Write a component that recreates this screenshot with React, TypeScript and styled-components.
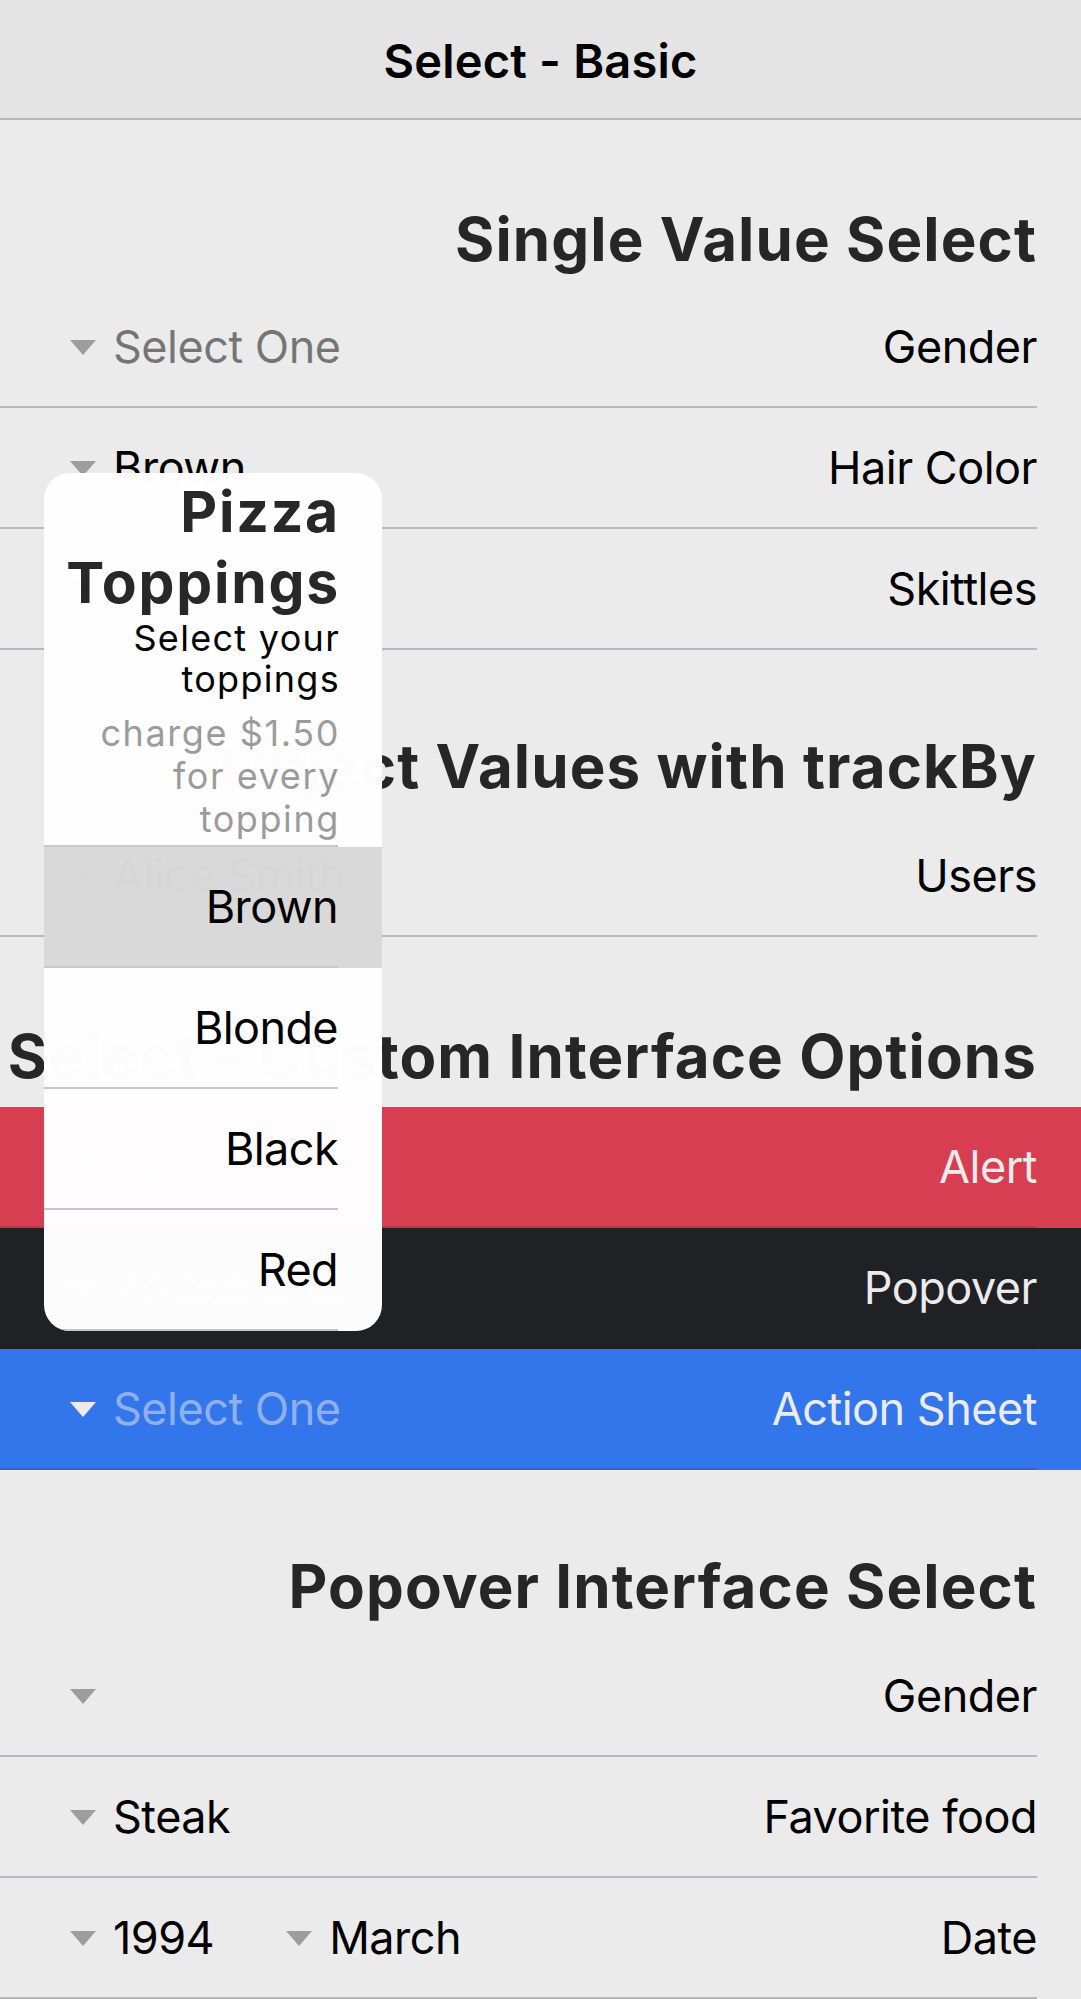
import React from 'react';
import styled, { createGlobalStyle } from 'styled-components';

type Tone = 'danger' | 'dark' | 'primary' | undefined;

const toneBg: Record<string, string> = {
  danger: '#eb445a',
  dark: '#222428',
  primary: '#3880ff',
};
const toneLine: Record<string, string> = {
  danger: '#cf3c4f',
  dark: '#1e2023',
  primary: '#3171e0',
};

const GlobalStyle = createGlobalStyle`
  *, *::before, *::after { box-sizing: border-box; }
  html, body { margin: 0; padding: 0; overflow: hidden; }
  body {
    font-family: Inter, "Noto Sans", "Liberation Sans", sans-serif;
    -webkit-font-smoothing: antialiased;
  }
`;

const Page = styled.div`
  position: relative;
  width: 100%;
  height: 1999px;
  overflow: hidden;
  background: #ffffff;
`;

const Toolbar = styled.header`
  height: 120px;
  padding-top: 3px;
  background: #f8f8f8;
  border-bottom: 2px solid #c6c6c6;
  display: flex;
  align-items: center;
  justify-content: center;
`;

const Title = styled.h1`
  margin: 0;
  font-size: 47px;
  font-weight: 600;
  letter-spacing: 0.2px;
  color: #000;
`;

const ListHeader = styled.h2<{ $top: number; $bottom: number }>`
  margin: 0;
  padding: ${(p) => p.$top}px 44px ${(p) => p.$bottom}px 0;
  font-size: 60px;
  line-height: 58px;
  font-weight: 700;
  letter-spacing: 1.1px;
  color: #2a2a2a;
  text-align: right;
  white-space: nowrap;
`;

const Item = styled.div<{ $tone?: Tone }>`
  padding-right: 44px;
  background: ${(p) => (p.$tone ? toneBg[p.$tone] : 'transparent')};
`;

const ItemInner = styled.div<{ $tone?: Tone }>`
  height: 121px;
  padding-left: 50px;
  display: flex;
  align-items: center;
  border-bottom: 2px solid ${(p) => (p.$tone ? toneLine[p.$tone] : '#c8c7cc')};
`;

const Label = styled.span<{ $tone?: Tone }>`
  margin-left: auto;
  font-size: 45px;
  letter-spacing: -0.5px;
  white-space: nowrap;
  color: ${(p) => (p.$tone ? '#ffffff' : '#000000')};
`;

const Select = styled.div`
  display: flex;
  align-items: center;
  gap: 17px;
  padding: 0 52px 0 20px;
`;

const SelectIcon = styled.span<{ $tone?: Tone }>`
  width: 0;
  height: 0;
  margin-top: 2px;
  border-top: 15px solid ${(p) => (p.$tone ? '#ffffff' : '#ababab')};
  border-left: 13.5px solid transparent;
  border-right: 13.5px solid transparent;
`;

const SelectText = styled.span<{ $tone?: Tone; $placeholder?: boolean }>`
  font-size: 45px;
  letter-spacing: -0.5px;
  white-space: nowrap;
  color: ${(p) =>
    p.$placeholder
      ? p.$tone
        ? 'rgba(255,255,255,0.5)'
        : 'rgba(0,0,0,0.5)'
      : p.$tone
      ? '#ffffff'
      : '#000000'};
`;

const Backdrop = styled.div`
  position: absolute;
  inset: 0;
  background: rgba(0, 0, 0, 0.08);
`;

const Popover = styled.div`
  position: absolute;
  top: 473px;
  left: 44px;
  width: 338px;
  background: #ffffff;
  border-radius: 26px;
  overflow: hidden;
  opacity: 0.99;
`;

const PopHeader = styled.div`
  margin-right: 44px;
  padding: 3px 0 4px 0;
  border-bottom: 2px solid #c8c7cc;
  text-align: right;
  white-space: nowrap;
`;

const PopLines = styled.div`
  margin-right: -2px;
`;

const PopTitle = styled.div`
  font-size: 57px;
  line-height: 71px;
  font-weight: 700;
  letter-spacing: 1.8px;
  color: #262626;
`;

const PopSubtitle = styled.div`
  font-size: 36px;
  line-height: 41px;
  letter-spacing: 1.3px;
  color: #000;
`;

const PopMessage = styled.div`
  margin-top: 12px;
  font-size: 36px;
  line-height: 43px;
  letter-spacing: 1.6px;
  color: #9b9b9b;
`;

const PopOption = styled.div<{ $active?: boolean }>`
  background: ${(p) => (p.$active ? '#d9d9d9' : 'transparent')};
`;

const PopOptionInner = styled.div`
  margin-right: 44px;
  height: 121px;
  display: flex;
  align-items: center;
  justify-content: flex-end;
  border-bottom: 2px solid #c8c7cc;
  font-size: 45px;
  letter-spacing: -0.6px;
  color: #000;
`;

type SelectDef = { text?: string; placeholder?: boolean };
type RowDef = { label: string; tone?: Tone; selects: SelectDef[] };
type SectionDef = { title: string; top: number; bottom: number; rows: RowDef[] };

const sections: SectionDef[] = [
  {
    title: 'Single Value Select',
    top: 90,
    bottom: 19,
    rows: [
      { label: 'Gender', selects: [{ text: 'Select One', placeholder: true }] },
      { label: 'Hair Color', selects: [{ text: 'Brown' }] },
      { label: 'Skittles', selects: [{}] },
    ],
  },
  {
    title: 'Object Values with trackBy',
    top: 87,
    bottom: 21,
    rows: [{ label: 'Users', selects: [{ text: 'Alice Smith' }] }],
  },
  {
    title: 'Select - Custom Interface Options',
    top: 90,
    bottom: 22,
    rows: [
      { label: 'Alert', tone: 'danger', selects: [{ text: 'Bacon' }] },
      { label: 'Popover', tone: 'dark', selects: [{ text: 'Select One', placeholder: true }] },
      { label: 'Action Sheet', tone: 'primary', selects: [{ text: 'Select One', placeholder: true }] },
    ],
  },
  {
    title: 'Popover Interface Select',
    top: 87,
    bottom: 21,
    rows: [
      { label: 'Gender', selects: [{}] },
      { label: 'Favorite food', selects: [{ text: 'Steak' }] },
      { label: 'Date', selects: [{ text: '1994' }, { text: 'March' }] },
    ],
  },
];

const options = ['Brown', 'Blonde', 'Black', 'Red'];

export default function App() {
  return (
    <Page>
      <GlobalStyle />
      <Toolbar>
        <Title>Select - Basic</Title>
      </Toolbar>
      {sections.map((s) => (
        <section key={s.title}>
          <ListHeader $top={s.top} $bottom={s.bottom}>
            {s.title}
          </ListHeader>
          {s.rows.map((r) => (
            <Item key={r.label} $tone={r.tone}>
              <ItemInner $tone={r.tone}>
                {r.selects.map((sel, i) => (
                  <Select key={i}>
                    <SelectIcon $tone={r.tone} />
                    {sel.text && (
                      <SelectText $tone={r.tone} $placeholder={sel.placeholder}>
                        {sel.text}
                      </SelectText>
                    )}
                  </Select>
                ))}
                <Label $tone={r.tone}>{r.label}</Label>
              </ItemInner>
            </Item>
          ))}
        </section>
      ))}
      <Backdrop />
      <Popover>
        <PopHeader>
          <PopLines>
            <PopTitle>
              Pizza
              <br />
              Toppings
            </PopTitle>
            <PopSubtitle>
              Select your
              <br />
              toppings
            </PopSubtitle>
            <PopMessage>
              charge $1.50
              <br />
              for every
              <br />
              topping
            </PopMessage>
          </PopLines>
        </PopHeader>
        {options.map((o, i) => (
          <PopOption key={o} $active={i === 0}>
            <PopOptionInner>{o}</PopOptionInner>
          </PopOption>
        ))}
      </Popover>
    </Page>
  );
}
